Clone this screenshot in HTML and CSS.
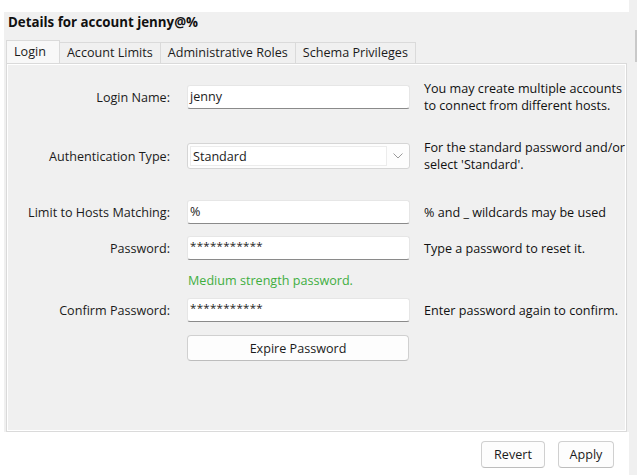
FILE: index.html
```html
<!DOCTYPE html>
<html>
<head>
<meta charset="utf-8">
<link rel="stylesheet" href="styles.css">
</head>
<body>
<div class="window">
  <div class="main">
    <div class="frame">
      <div class="title">Details for account jenny@%</div>
      <div class="tabs">
        <div class="tab active">Login</div>
        <div class="tab">Account Limits</div>
        <div class="tab">Administrative Roles</div>
        <div class="tab">Schema Privileges</div>
      </div>
      <div class="pane">
        <div class="row row-login">
          <label class="lbl">Login Name:</label>
          <div class="field">jenny</div>
          <div class="help">You may create multiple accounts<br>to connect from different hosts.</div>
        </div>
        <div class="row row-auth">
          <label class="lbl">Authentication Type:</label>
          <div class="combo">
            <div class="combo-text">Standard</div>
            <div class="combo-arrow">
              <svg width="10" height="6" viewBox="0 0 10 6"><path d="M0.5 0.5 L5 5 L9.5 0.5" fill="none" stroke="#9a9a9a" stroke-width="1"/></svg>
            </div>
          </div>
          <div class="help">For the standard password and/or<br>select 'Standard'.</div>
        </div>
        <div class="row row-hosts">
          <label class="lbl">Limit to Hosts Matching:</label>
          <div class="field">%</div>
          <div class="help">% and _ wildcards may be used</div>
        </div>
        <div class="row row-pass">
          <label class="lbl">Password:</label>
          <div class="field stars">***********</div>
          <div class="help">Type a password to reset it.</div>
        </div>
        <div class="row row-strength">
          <div class="lbl"></div>
          <div class="strength">Medium strength password.</div>
        </div>
        <div class="row row-confirm">
          <label class="lbl">Confirm Password:</label>
          <div class="field stars">***********</div>
          <div class="help">Enter password again to confirm.</div>
        </div>
        <div class="row row-expire">
          <div class="lbl"></div>
          <button class="btn btn-wide">Expire Password</button>
        </div>
      </div>
    </div>
    <div class="actions">
      <button class="btn btn-act revert">Revert</button>
      <button class="btn btn-act apply">Apply</button>
    </div>
  </div>
  <div class="scroll"><div class="thumb"></div></div>
</div>
</body>
</html>
```

FILE: styles.css
```css
html, body {
  margin: 0;
  padding: 0;
  background: #ffffff;
}
body {
  font-family: "Open Sans", "Noto Sans", sans-serif;
  font-size: 12.6px;
  color: #1b1b1b;
}
.window {
  display: flex;
  width: 637px;
  height: 475px;
  overflow: hidden;
}
.main {
  width: 629px;
  padding-top: 12px;
  display: flex;
  flex-direction: column;
}
.scroll {
  width: 8px;
  background: #f0f0f0;
  position: relative;
}
.thumb {
  position: absolute;
  right: 0;
  top: 30px;
  width: 2px;
  height: 32px;
  background: #c9c9c9;
}
.frame {
  margin-left: 4px;
  width: 625px;
  height: 420px;
  background: #f0f0f0;
  display: flex;
  flex-direction: column;
}
.title {
  font-weight: bold;
  font-size: 13.3px;
  padding-left: 4px;
  height: 16px;
  line-height: 16px;
  padding-top: 2px;
  color: #111;
}
.tabs {
  display: flex;
  margin-top: 10px;
  margin-left: 2px;
  height: 23px;
  align-items: flex-end;
}
.tab {
  line-height: 19px;
  padding: 0 7px 0 7px;
  border: 1px solid #dadada;
  border-bottom: none;
  border-left: none;
  background: #f0f0f0;
  box-sizing: border-box;
  height: 21px;
}
.tab.active {
  height: 23px;
  line-height: 21px;
  padding: 0 13px 0 7px;
  background: #f8f8f8;
  border-left: 1px solid #dadada;
}
.pane {
  margin-left: 2px;
  width: 621px;
  flex: 1;
  border: 1px solid #dadada;
  box-shadow: inset 1px 1px 0 #ffffff, inset -1px -1px 0 #ffffff;
  background: #f0f0f0;
  box-sizing: border-box;
  overflow: hidden;
  padding-top: 21px;
}
.row {
  display: flex;
  align-items: center;
  height: 24px;
}
.lbl {
  width: 163px;
  flex: none;
  text-align: right;
  padding-right: 17px;
  white-space: nowrap;
}
.help {
  padding-left: 14px;
  white-space: nowrap;
  line-height: 17px;
  color: #111;
}
.row-auth { height: 26px; margin-top: 34px; }
.row-hosts { margin-top: 31px; }
.row-pass { margin-top: 12px; }
.row-strength { height: 20px; margin-top: 10px; }
.row-confirm { margin-top: 8px; }
.row-expire { height: 26px; margin-top: 13px; }

.field {
  width: 223px;
  flex: none;
  height: 24px;
  box-sizing: border-box;
  background: #ffffff;
  border: 1px solid #e6e6e6;
  border-bottom: 1px solid #8a8a8a;
  border-radius: 3px;
  padding-left: 2px;
  line-height: 21px;
}
.stars {
  font-size: 11.5px;
  letter-spacing: 0.3px;
  line-height: 17px;
}
.combo {
  width: 223px;
  flex: none;
  height: 26px;
  box-sizing: border-box;
  border: 1px solid #d5d5d5;
  border-radius: 3px;
  background: #fdfdfd;
  display: flex;
  align-items: stretch;
  padding: 2px 0 2px 2px;
}
.combo-text {
  flex: 1;
  background: #ffffff;
  border: 1px solid #ececec;
  padding-left: 2px;
  line-height: 19px;
}
.combo-arrow {
  width: 22px;
  display: flex;
  align-items: center;
  justify-content: center;
}
.strength {
  color: #3fae3f;
  padding-left: 1px;
}
.btn {
  font-family: "Open Sans", "Noto Sans", sans-serif;
  font-size: 12.6px;
  color: #1b1b1b;
  background: #fdfdfd;
  border: 1px solid #d0d0d0;
  border-bottom-color: #bdbdbd;
  border-radius: 4px;
  padding: 0;
  margin: 0;
  box-sizing: border-box;
}
.btn-wide {
  height: 26px;
  width: 222px;
  flex: none;
}
.actions {
  display: flex;
  justify-content: flex-end;
  gap: 13px;
  padding-top: 9px;
  padding-right: 15px;
}
.btn-act {
  height: 27px;
}
.revert { width: 64px; }
.apply { width: 56px; }
```
